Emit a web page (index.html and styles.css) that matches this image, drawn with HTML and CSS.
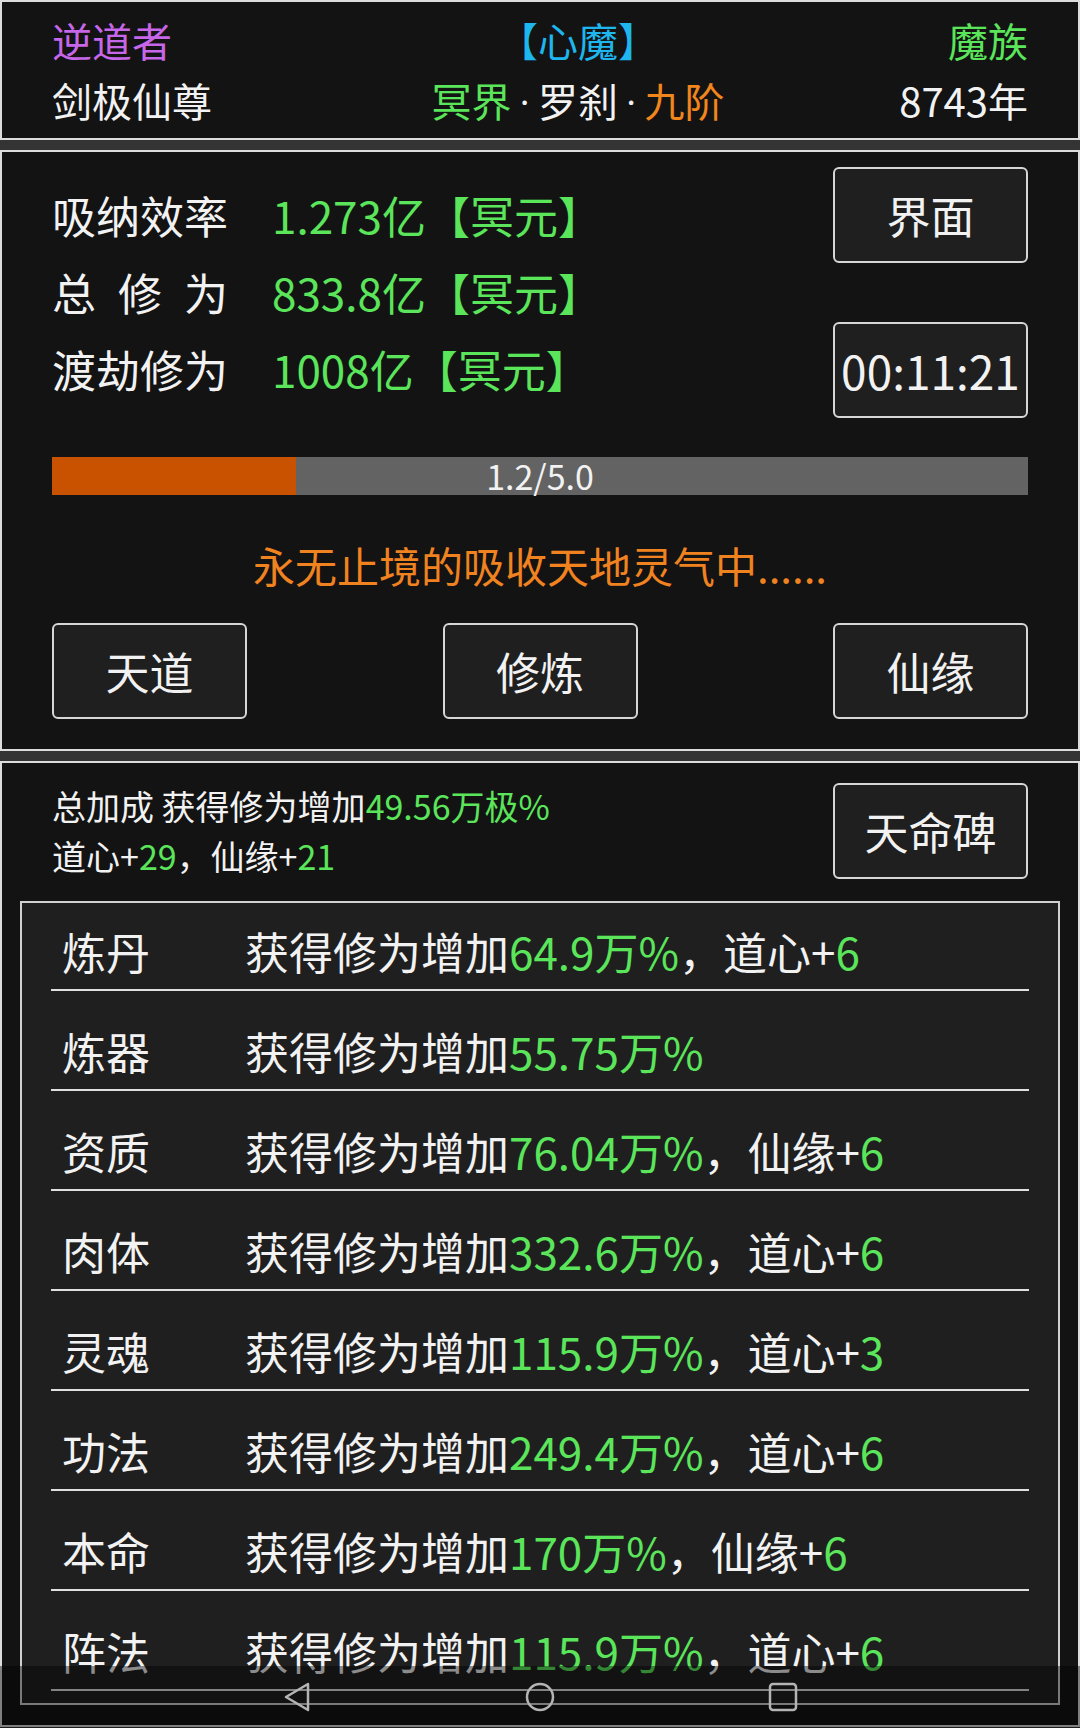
FILE: index.html
```html
<!DOCTYPE html>
<html lang="zh-CN">
<head>
  <meta charset="UTF-8">
  <meta name="viewport" content="width=device-width, initial-scale=1.0">
  <title>修仙</title>
  <link rel="stylesheet" href="styles.css">
</head>
<body>

<!-- Character header -->
<section class="panel head">
  <div class="purple">逆道者</div>
  <div class="mid cyan">【心魔】</div>
  <div class="right green">魔族</div>
  <div>剑极仙尊</div>
  <div class="mid"><span class="green">冥界</span><span class="dot">·</span>罗刹<span class="dot">·</span><span class="orange">九阶</span></div>
  <div class="right">8743年</div>
</section>

<!-- Cultivation status -->
<section class="panel main">
  <div class="stats-area">
    <div class="stats">
      <div class="stat"><span class="label">吸纳效率</span><span class="green">1.273亿【冥元】</span></div>
      <div class="stat"><span class="label">总修为</span><span class="green">833.8亿【冥元】</span></div>
      <div class="stat"><span class="label">渡劫修为</span><span class="green">1008亿【冥元】</span></div>
    </div>
    <div class="side-btns">
      <button class="btn">界面</button>
      <button class="btn timer">00:11:21</button>
    </div>
  </div>

  <div class="bar">
    <div class="fill" style="width: 25%;"></div>
    <span class="bar-text">1.2/5.0</span>
  </div>

  <p class="msg">永无止境的吸收天地灵气中......</p>

  <div class="actions">
    <button class="btn">天道</button>
    <button class="btn">修炼</button>
    <button class="btn">仙缘</button>
  </div>
</section>

<!-- Bonus list -->
<section class="panel bonus">
  <div class="bonus-head">
    <div class="summary">
      <div>总加成 获得修为增加<span class="green">49.56万极%</span></div>
      <div>道心+<span class="green">29</span>，仙缘+<span class="green">21</span></div>
    </div>
    <button class="btn">天命碑</button>
  </div>

  <div class="list">
    <div class="row"><span>炼丹</span><span>获得修为增加<span class="green">64.9万%</span>，道心+<span class="green">6</span></span></div>
    <div class="row"><span>炼器</span><span>获得修为增加<span class="green">55.75万%</span></span></div>
    <div class="row"><span>资质</span><span>获得修为增加<span class="green">76.04万%</span>，仙缘+<span class="green">6</span></span></div>
    <div class="row"><span>肉体</span><span>获得修为增加<span class="green">332.6万%</span>，道心+<span class="green">6</span></span></div>
    <div class="row"><span>灵魂</span><span>获得修为增加<span class="green">115.9万%</span>，道心+<span class="green">3</span></span></div>
    <div class="row"><span>功法</span><span>获得修为增加<span class="green">249.4万%</span>，道心+<span class="green">6</span></span></div>
    <div class="row"><span>本命</span><span>获得修为增加<span class="green">170万%</span>，仙缘+<span class="green">6</span></span></div>
    <div class="row"><span>阵法</span><span>获得修为增加<span class="green">115.9万%</span>，道心+<span class="green">6</span></span></div>
  </div>
</section>

<!-- System navigation bar -->
<div class="navbar">
  <svg width="30" height="32" viewBox="0 0 30 32"><path d="M26 3 L4 16 L26 29 Z" fill="none" stroke="#b4b4b4" stroke-width="2.5" stroke-linejoin="round"/></svg>
  <svg width="32" height="32" viewBox="0 0 32 32"><circle cx="16" cy="16" r="13" fill="none" stroke="#b4b4b4" stroke-width="2.5"/></svg>
  <svg width="30" height="30" viewBox="0 0 30 30"><rect x="2" y="2" width="26" height="26" rx="3" fill="none" stroke="#b4b4b4" stroke-width="2.5"/></svg>
</div>

</body>
</html>
```

FILE: styles.css
```css
* {
  box-sizing: border-box;
}

html, body {
  margin: 0;
}

body {
  width: 1080px;
  background-color: #343434;
  color: #f2f2f2;
  font-family: "Noto Sans CJK SC", "Noto Sans", sans-serif;
}

.green { color: #5be55b; }
.purple { color: #c666e8; }
.cyan { color: #1eb6ec; }
.orange { color: #f0861c; }

.panel {
  background-color: #131313;
  border: 2px solid #dcdcdc;
}

.panel + .panel {
  margin-top: 10px;
}

/* header */
.head {
  display: grid;
  grid-template-columns: 326px 1fr 250px;
  grid-auto-rows: 60px;
  padding: 8px 50px;
  font-size: 40px;
  line-height: 60px;
}

.head .mid {
  text-align: center;
}

.head .right {
  text-align: right;
}

.dot {
  font-family: Roboto, "Noto Sans", sans-serif;
  line-height: 1;
  padding: 0 8px;
}

/* buttons */
.btn {
  display: flex;
  align-items: center;
  justify-content: center;
  width: 195px;
  height: 96px;
  padding: 0;
  border: 2px solid #d6d6d6;
  border-radius: 6px;
  background-color: #1f1f1f;
  color: #f2f2f2;
  font-family: inherit;
  font-size: 44px;
  line-height: 1;
}

.timer {
  font-size: 46px;
}

/* main status panel */
.main {
  padding: 15px 50px 30px;
}

.stats-area {
  display: flex;
  align-items: center;
  justify-content: space-between;
}

.stats {
  font-size: 44px;
  line-height: 77px;
}

.stat {
  display: grid;
  grid-template-columns: 176px auto;
  column-gap: 44px;
}

.label {
  text-align-last: justify;
}

.side-btns {
  display: flex;
  flex-direction: column;
  gap: 59px;
}

.bar {
  display: grid;
  height: 38px;
  margin-top: 39px;
  background-color: #636363;
}

.bar > * {
  grid-area: 1 / 1;
}

.fill {
  background-color: #c85200;
}

.bar-text {
  text-align: center;
  font-size: 34px;
  line-height: 38px;
}

.msg {
  margin: 45px 0 0;
  text-align: center;
  color: #f08220;
  font-size: 42px;
  line-height: 50px;
}

.actions {
  display: flex;
  justify-content: space-between;
  margin-top: 33px;
}

/* bonus panel */
.bonus {
  padding: 18px 18px 20px;
}

.bonus-head {
  display: flex;
  align-items: center;
  justify-content: space-between;
  padding: 0 32px;
  margin-bottom: 20px;
}

.summary {
  font-size: 34px;
  line-height: 50px;
}

.list {
  display: flex;
  flex-direction: column;
  gap: 12px;
  padding: 0 29px 12px;
  border: 2px solid #d0d0d0;
  background-color: #1f1f1f;
}

.row {
  display: grid;
  grid-template-columns: 183px auto;
  height: 88px;
  padding: 23px 0 0 11px;
  border-bottom: 2px solid #e0e0e0;
  font-size: 44px;
  line-height: 50px;
}

/* system nav bar, lies over the list */
.navbar {
  position: fixed;
  left: 0;
  right: 0;
  bottom: 0;
  height: 62px;
  display: flex;
  align-items: center;
  justify-content: center;
  gap: 212px;
  background-color: rgba(0, 0, 0, 0.42);
}
```
